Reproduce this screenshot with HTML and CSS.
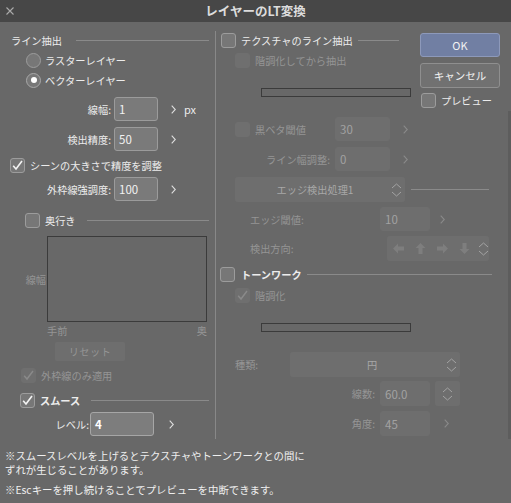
FILE: index.html
```html
<!DOCTYPE html>
<html lang="ja">
<head>
<meta charset="utf-8">
<title>レイヤーのLT変換</title>
<link rel="stylesheet" href="styles.css">
</head>
<body>
<div class="dialog">
  <header class="titlebar">
    <span class="close"><svg width="8" height="8" viewBox="0 0 8 8"><path d="M0.5 0.5L7.5 7.5M7.5 0.5L0.5 7.5" stroke="#ababab" stroke-width="1.1"/></svg></span>
    <h1 class="title">レイヤーのLT変換</h1>
    <span></span>
  </header>

  <div class="main">
    <section class="left">
      <div class="row sechead"><span>ライン抽出</span><span class="line"></span></div>
      <div class="row opt"><span class="radio"></span><span>ラスターレイヤー</span></div>
      <div class="row opt"><span class="radio on"></span><span>ベクターレイヤー</span></div>

      <div class="row field f1"><span class="lbl">線幅:</span><span class="inp w44">1</span><svg class="chev" width="5" height="9" viewBox="0 0 5 9"><path d="M0.7 0.7L4.3 4.5L0.7 8.3" fill="none" stroke="currentColor" stroke-width="1.1"/></svg><span class="unit">px</span></div>
      <div class="row field f2"><span class="lbl">検出精度:</span><span class="inp w44">50</span><svg class="chev" width="5" height="9" viewBox="0 0 5 9"><path d="M0.7 0.7L4.3 4.5L0.7 8.3" fill="none" stroke="currentColor" stroke-width="1.1"/></svg></div>

      <div class="row chk scene"><span class="cb"><svg width="13" height="13" viewBox="0 0 13 13"><path d="M2.2 6.8L5 10L11 2" fill="none" stroke="#f4f4f4" stroke-width="1.6"/></svg></span><span>シーンの大きさで精度を調整</span></div>

      <div class="row field f3"><span class="lbl">外枠線強調度:</span><span class="inp w44">100</span><svg class="chev" width="5" height="9" viewBox="0 0 5 9"><path d="M0.7 0.7L4.3 4.5L0.7 8.3" fill="none" stroke="currentColor" stroke-width="1.1"/></svg></div>

      <div class="row chk depth"><span class="cb"></span><span>奥行き</span><span class="line"></span></div>

      <div class="graph">
        <span class="ylbl">線幅</span>
        <div class="plot"></div>
      </div>
      <div class="axis"><span>手前</span><span>奥</span></div>
      <div class="reset">リセット</div>

      <div class="row chk outer"><span class="cb dis"><svg width="13" height="13" viewBox="0 0 13 13"><path d="M2.2 6.8L5 10L11 2" fill="none" stroke="#8a8a8a" stroke-width="1.5"/></svg></span><span class="dtext">外枠線のみ適用</span></div>

      <div class="row chk smooth"><span class="cb"><svg width="13" height="13" viewBox="0 0 13 13"><path d="M2.2 6.8L5 10L11 2" fill="none" stroke="#f4f4f4" stroke-width="1.6"/></svg></span><span class="strong">スムース</span><span class="line"></span></div>

      <div class="row field level"><span class="lbl">レベル:</span><span class="inp w64 focus">4</span><svg class="chev" width="5" height="9" viewBox="0 0 5 9"><path d="M0.7 0.7L4.3 4.5L0.7 8.3" fill="none" stroke="currentColor" stroke-width="1.1"/></svg></div>
    </section>

    <div class="vdiv"></div>

    <section class="right">
      <div class="rtop">
        <div class="tex">
          <div class="row texhead"><span class="cb"></span><span>テクスチャのライン抽出</span><span class="line"></span></div>
          <div class="row sub"><span class="cb dis"></span><span class="dtext">階調化してから抽出</span></div>
          <div class="bar"></div>
        </div>
        <div class="btns">
          <button class="btn ok">OK</button>
          <button class="btn cancel">キャンセル</button>
          <div class="row preview"><span class="cb"></span><span>プレビュー</span></div>
        </div>
      </div>

      <div class="rlow">
        <div class="row rfield black">
          <span class="rl cbl"><span class="cb dis"></span><span class="dtext">黒ベタ閾値</span></span>
          <span class="inp dis w55">30</span>
          <svg class="chev dchev c13" width="5" height="9" viewBox="0 0 5 9"><path d="M0.7 0.7L4.3 4.5L0.7 8.3" fill="none" stroke="currentColor" stroke-width="1.1"/></svg>
        </div>
        <div class="row rfield lw">
          <span class="rl right dtext">ライン幅調整:</span>
          <span class="inp dis w55">0</span>
          <svg class="chev dchev c13" width="5" height="9" viewBox="0 0 5 9"><path d="M0.7 0.7L4.3 4.5L0.7 8.3" fill="none" stroke="currentColor" stroke-width="1.1"/></svg>
        </div>

        <div class="row edgerow">
          <div class="select edge"><span class="stext">エッジ検出処理1</span><svg class="updown" width="11" height="16" viewBox="0 0 11 16"><path d="M1 6L5.5 2L10 6M1 10L5.5 14L10 10" fill="none" stroke="currentColor" stroke-width="1"/></svg></div>
          <span class="line"></span>
        </div>

        <div class="row rfield et">
          <span class="rl2 dtext">エッジ閾値:</span>
          <span class="inp dis w50">10</span>
          <svg class="chev dchev c10" width="5" height="9" viewBox="0 0 5 9"><path d="M0.7 0.7L4.3 4.5L0.7 8.3" fill="none" stroke="currentColor" stroke-width="1.1"/></svg>
        </div>

        <div class="row rfield dir">
          <span class="rl3 dtext">検出方向:</span>
          <div class="arrows">
            <svg width="11" height="11" viewBox="0 0 11 11"><path d="M0 5.5L5 0.5V3.5H11V7.5H5V10.5Z" fill="currentColor"/></svg>
            <svg width="11" height="11" viewBox="0 0 11 11"><path d="M5.5 0L10.5 5H7.5V11H3.5V5H0.5Z" fill="currentColor"/></svg>
            <svg width="11" height="11" viewBox="0 0 11 11"><path d="M11 5.5L6 0.5V3.5H0V7.5H6V10.5Z" fill="currentColor"/></svg>
            <svg width="11" height="11" viewBox="0 0 11 11"><path d="M5.5 11L10.5 6H7.5V0H3.5V6H0.5Z" fill="currentColor"/></svg>
            <svg class="updown" width="11" height="16" viewBox="0 0 11 16"><path d="M1 6L5.5 2L10 6M1 10L5.5 14L10 10" fill="none" stroke="currentColor" stroke-width="1"/></svg>
          </div>
        </div>

        <div class="row tonehead"><span class="cb"></span><span class="strong">トーンワーク</span><span class="line"></span></div>
        <div class="row sub"><span class="cb dis"><svg width="13" height="13" viewBox="0 0 13 13"><path d="M2.2 6.8L5 10L11 2" fill="none" stroke="#8a8a8a" stroke-width="1.5"/></svg></span><span class="dtext">階調化</span></div>
        <div class="bar"></div>

        <div class="row rfield kind">
          <span class="rl4 dtext">種類:</span>
          <div class="select circ"><span class="stext">円</span><svg class="updown" width="11" height="16" viewBox="0 0 11 16"><path d="M1 6L5.5 2L10 6M1 10L5.5 14L10 10" fill="none" stroke="currentColor" stroke-width="1"/></svg></div>
        </div>
        <div class="row rfield lines">
          <span class="rl5 dtext">線数:</span>
          <span class="inp dis w50 h25">60.0</span>
          <span class="spin"><svg class="updown" width="11" height="16" viewBox="0 0 11 16"><path d="M1 6L5.5 2L10 6M1 10L5.5 14L10 10" fill="none" stroke="currentColor" stroke-width="1"/></svg></span>
        </div>
        <div class="row rfield angle">
          <span class="rl5 dtext">角度:</span>
          <span class="inp dis w50 h25">45</span>
          <svg class="chev dchev c14" width="5" height="9" viewBox="0 0 5 9"><path d="M0.7 0.7L4.3 4.5L0.7 8.3" fill="none" stroke="currentColor" stroke-width="1.1"/></svg>
        </div>
      </div>
    </section>
  </div>

  <div class="notes">
    <p>※スムースレベルを上げるとテクスチャやトーンワークとの間に<br>ずれが生じることがあります。</p>
    <p>※Escキーを押し続けることでプレビューを中断できます。</p>
  </div>
</div>
</body>
</html>
```

FILE: styles.css
```css
* { box-sizing: border-box; margin: 0; padding: 0; }

body {
  width: 511px;
  height: 503px;
  overflow: hidden;
  background: #686868;
  font-family: "Noto Sans CJK JP", "Noto Sans", sans-serif;
  font-size: 10.2px;
  color: #ececec;
}

.titlebar {
  height: 22px;
  background: #474747;
  display: grid;
  grid-template-columns: 1fr auto 1fr;
  align-items: center;
}
.close { display: flex; padding-left: 6px; }
.title {
  font-size: 12.5px;
  font-weight: bold;
  color: #dcdcdc;
  line-height: 22px;
}

.main {
  display: flex;
  height: 417px;
  padding-top: 8px;
}

.left { width: 215px; display: flex; flex-direction: column; }
.vdiv { width: 1px; background: #888888; margin-top: 1px; }
.right { flex: 1; display: flex; flex-direction: column; }

.row { display: flex; align-items: center; white-space: nowrap; }
.line { flex: 1; height: 1px; background: #8a8a8a; }

.dtext { color: #959595; }
.strong { font-weight: bold; }

/* checkbox & radio */
.cb {
  width: 15px; height: 15px; flex: none;
  background: #777777;
  border: 1px solid #9c9c9c;
  border-radius: 3px;
  display: flex; align-items: center; justify-content: center;
}
.cb.dis { background: #6f6f6f; border-color: #6f6f6f; }

.radio {
  width: 15px; height: 15px; flex: none;
  border-radius: 50%;
  background: #777777;
  border: 1px solid #9c9c9c;
  display: flex; align-items: center; justify-content: center;
}
.radio.on { border-color: #a8a8a8; }
.radio.on::after {
  content: "";
  width: 6px; height: 6px;
  border-radius: 50%;
  background: #ffffff;
}

/* inputs */
.inp {
  height: 24px; flex: none;
  background: #7a7a7a;
  border: 1px solid #9b9b9b;
  border-radius: 3px;
  padding-left: 4px;
  display: flex; align-items: center;
  font-size: 11.5px;
  color: #f2f2f2;
}
.inp.focus { background: #7d7d7d; border-color: #a6a6a6; font-weight: bold; color: #ffffff; }
.inp.dis { background: #6e6e6e; border-color: #6e6e6e; color: #a2a2a2; }
.w44 { width: 44px; }
.w50 { width: 50px; }
.w55 { width: 55px; }
.w64 { width: 64px; }
.h25 { height: 25px; }

.chev { flex: none; color: #dedede; margin-left: 13px; }
.dchev { color: #8a8a8a; }
.c10 { margin-left: 10px; }
.c13 { margin-left: 13px; }
.c14 { margin-left: 14px; }
.unit { margin-left: 8px; font-size: 11px; }

/* left column */
.sechead { height: 20px; padding-left: 11px; padding-right: 6px; }
.sechead .line { margin-left: 14px; }

.opt { height: 20px; padding-left: 26px; gap: 4px; }

.field { height: 24px; }
.field .lbl { width: 111px; text-align: right; }
.field .inp { margin-left: 3px; }
.f1 { margin-top: 7px; }
.f2 { margin-top: 6px; }

.chk { gap: 5px; }
.scene { height: 24px; margin-top: 2px; padding-left: 10px; }
.depth { height: 24px; margin-top: 7px; padding-left: 25px; padding-right: 6px; }
.depth .line { margin-left: 6px; }

.graph { display: flex; height: 86px; margin-top: 4px; }
.ylbl {
  width: 47px; padding-right: 1px;
  display: flex; align-items: center; justify-content: flex-end;
  color: #959595;
}
.plot { width: 160px; border: 1px solid #3b3b3b; }

.axis {
  display: flex; justify-content: space-between;
  width: 160px; height: 14px;
  margin: 2px 0 0 47px;
  color: #959595; line-height: 14px;
}

.reset {
  width: 70px; height: 19px;
  margin: 4px 0 0 55px;
  background: #6e6e6e;
  border-radius: 2px;
  color: #959595;
  display: flex; align-items: center; justify-content: center;
  letter-spacing: 0.5px;
}

.outer { height: 23px; margin-top: 3px; padding-left: 21px; }
.smooth { height: 24px; margin-top: 1px; padding-left: 20px; padding-right: 6px; }
.smooth .line { margin-left: 6px; }

.level .lbl { width: 89px; }
.level .inp { margin-left: 1px; }
.level .chev { margin-left: 15px; }

/* right column */
.rtop { display: flex; height: 81px; flex: none; }
.tex { width: 200px; }
.texhead { height: 20px; padding-left: 5px; padding-right: 17px; gap: 5px; }
.texhead .line { margin-left: 0; }
.sub { height: 20px; padding-left: 19px; gap: 5px; }
.bar {
  width: 150px; height: 9px;
  margin: 18px 0 0 45px;
  border: 1px solid #3b3b3b;
}

.btns { width: 80px; margin-left: 4px; display: flex; flex-direction: column; }
.btn {
  font-family: inherit;
  font-size: 10.5px;
  height: 24px;
  border-radius: 3px;
  color: #f2f2f2;
  display: flex; align-items: center; justify-content: center;
}
.ok { margin-top: 3px; background: #717fa3; border: 1px solid #8d99ba; font-size: 11px; }
.cancel { margin-top: 6px; height: 25px; background: #717171; border: 1px solid #8f8f8f; }
.preview { height: 21px; margin-top: 2px; padding-left: 1px; gap: 5px; }

.rlow {
  flex: 1;
  display: flex; flex-direction: column;
  border-right: 3px solid #5d5d5d;
}

.rfield { height: 24px; flex: none; }
.black { margin-top: 6px; }
.lw { margin-top: 6px; }
.rl { width: 119px; flex: none; }
.cbl { display: flex; align-items: center; gap: 5px; padding-left: 19px; }
.rl.right { text-align: right; padding-right: 5px; }

.select {
  height: 25px; flex: none;
  background: #6e6e6e;
  border-radius: 3px;
  display: flex; align-items: center;
  position: relative;
  color: #a8a8a8;
}
.select .stext { flex: 1; text-align: center; }
.updown { flex: none; color: #a3a3a3; }
.select .updown { margin-right: 3px; }

.edgerow { height: 25px; margin-top: 6px; padding-right: 19px; }
.edge { width: 170px; margin-left: 19px; }
.edge .stext { padding-left: 4px; }
.edgerow .line { margin-left: 6px; }

.et { margin-top: 5px; }
.rl2 { width: 164px; padding-left: 34px; flex: none; }

.dir { margin-top: 5px; height: 25px; }
.rl3 { width: 171px; padding-left: 34px; flex: none; }
.arrows {
  width: 102px; height: 25px;
  background: #6e6e6e;
  border-radius: 3px;
  display: flex; align-items: center;
  padding-left: 6px;
  gap: 11px;
  color: #7e7e7e;
}
.arrows .updown { margin-left: -3px; }

.tonehead { height: 22px; margin-top: 2px; padding-left: 4px; padding-right: 16px; gap: 6px; }
.tonehead .line { margin-left: -1px; }

.kind { margin-top: 20px; height: 25px; }
.rl4 { width: 74px; padding-left: 19px; flex: none; }
.circ { width: 170px; }
.circ .stext { padding-left: 8px; }

.lines { margin-top: 4px; height: 25px; }
.angle { margin-top: 5px; height: 25px; }
.rl5 { width: 164px; padding-right: 5px; text-align: right; flex: none; }
.spin {
  width: 25px; height: 25px; margin-left: 5px;
  background: #6e6e6e; border-radius: 3px;
  display: flex; align-items: center; justify-content: center;
}

/* notes */
.notes {
  padding: 10px 0 0 5px;
  font-size: 10.4px;
  line-height: 14px;
  color: #efefef;
}
.notes p + p { margin-top: 6px; }
```
